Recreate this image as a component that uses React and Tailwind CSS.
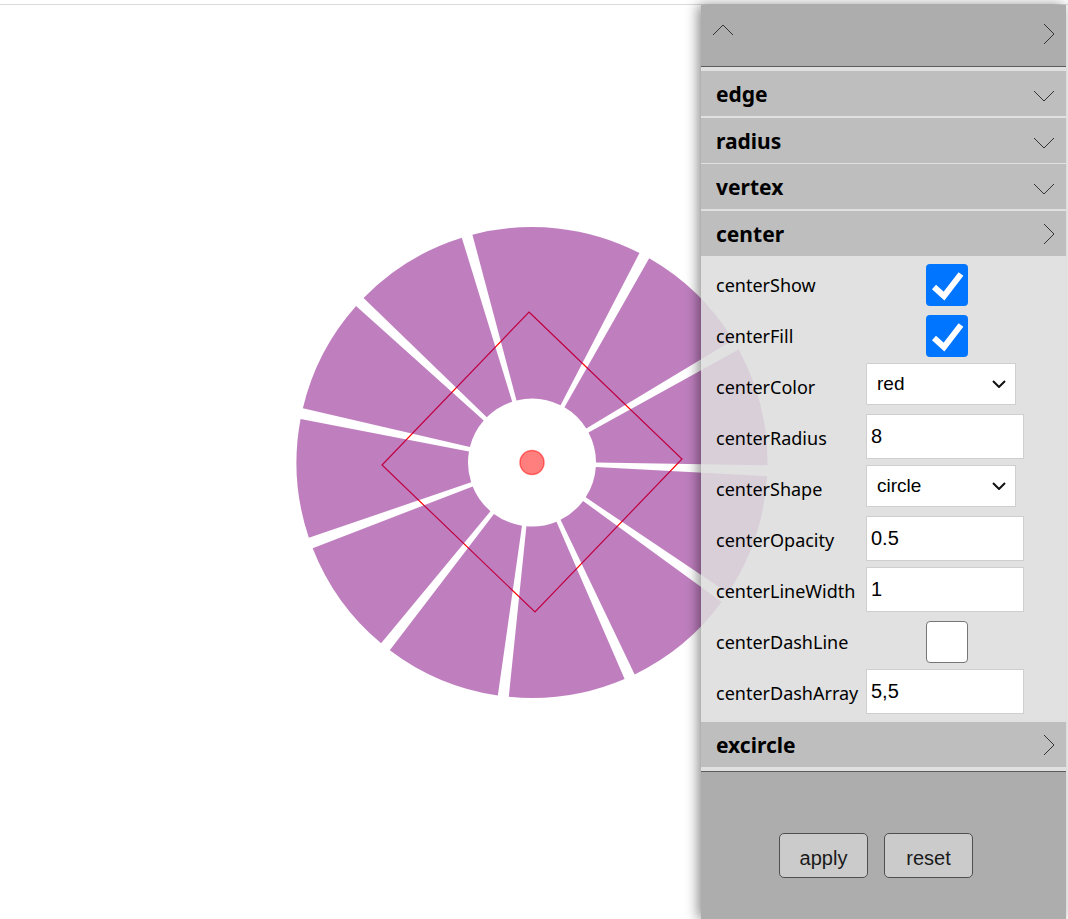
import React from "react";

const CX = 532;
const CY = 457.5;

// gap boundaries, degrees counter-clockwise from +x
const BOUNDS = [106, 61.5, 30, -2, -35, -65.5, -97, -128.5, -160, -192, -223, -254];

function pt(a, r) {
  const t = (a * Math.PI) / 180;
  return `${(CX + r * Math.cos(t)).toFixed(2)} ${(CY - r * Math.sin(t)).toFixed(2)}`;
}

function sectorPath(a1, a2) {
  const r0 = 64;
  const R = 235.5;
  const ga = 1.1;
  const gl = 1;
  const off = (r) => ga + (Math.asin(gl / r) * 180) / Math.PI;
  return [
    `M${pt(a1 + off(R), R)}`,
    `A${R} ${R} 0 0 0 ${pt(a2 - off(R), R)}`,
    `L${pt(a2 - off(r0), r0)}`,
    `A${r0} ${r0} 0 0 1 ${pt(a1 + off(r0), r0)}`,
    "Z",
  ].join(" ");
}

function Chart() {
  const sectors = [];
  for (let i = 0; i < BOUNDS.length - 1; i++) {
    sectors.push(sectorPath(BOUNDS[i + 1], BOUNDS[i]));
  }
  return (
    <svg width="1068" height="914" className="block">
      <polygon
        points="529,307 682,454 535,607 382,460"
        fill="none"
        stroke="red"
        strokeWidth="1.2"
      />
      {sectors.map((d, i) => (
        <path key={i} d={d} fill="purple" fillOpacity="0.5" />
      ))}
      <circle cx={CX} cy={CY} r="12" fill="red" fillOpacity="0.5" stroke="red" strokeOpacity="0.5" strokeWidth="1.5" />
    </svg>
  );
}

function ChevronDown() {
  return (
    <svg width="22" height="12" viewBox="0 0 22 12" className="mt-[5px]">
      <path d="M1 1 L11 11 L21 1" fill="none" stroke="#333" strokeWidth="1" />
    </svg>
  );
}

function ChevronRight() {
  return (
    <svg width="12" height="22" viewBox="0 0 12 22">
      <path d="M1 1 L11 11 L1 21" fill="none" stroke="#333" strokeWidth="1" />
    </svg>
  );
}

function SectionHeader({ title, open, className = "" }) {
  return (
    <div
      className={
        "h-[45px] bg-[#bebebe] flex items-center justify-between pl-[15px] pr-[11px] " + className
      }
    >
      <span className="pt-[3px] text-[21px] font-bold text-black" style={{ fontFamily: '"Noto Sans", sans-serif' }}>
        {title}
      </span>
      {open ? <ChevronDown /> : <ChevronRight />}
    </div>
  );
}

function Check({ on }) {
  if (!on) {
    return <div className="ml-[60px] w-[42px] h-[42px] rounded-[4px] bg-white border border-[#767676]" />;
  }
  return (
    <div className="ml-[60px] w-[42px] h-[42px] rounded-[4px] bg-[#0075ff] flex items-center justify-center">
      <svg width="42" height="42" viewBox="0 0 42 42">
        <path
          d="M8 23 L18 32 L35 10"
          fill="none"
          stroke="white"
          strokeWidth="6"
          strokeLinejoin="miter"
        />
      </svg>
    </div>
  );
}

function SelectBox({ value }) {
  return (
    <div
      className="w-[150px] h-[42px] mt-[-5px] bg-white border border-[#cfcfcf] flex items-center justify-between pl-[10px] pr-[9px] text-[19px] text-black"
      style={{ fontFamily: '"Liberation Sans", Arial, sans-serif' }}
    >
      <span>{value}</span>
      <svg width="14" height="8" viewBox="0 0 14 8">
        <path d="M1 1 L7 7 L13 1" fill="none" stroke="#111" strokeWidth="2" />
      </svg>
    </div>
  );
}

function TextBox({ value }) {
  return (
    <input
      readOnly
      value={value}
      className="w-[158px] h-[45px] mt-[-2px] bg-white border border-[#cfcfcf] pl-[4px] text-[20px] text-black outline-none"
      style={{ fontFamily: '"Liberation Sans", Arial, sans-serif' }}
    />
  );
}

const ROWS = [
  { label: "centerShow", kind: "check", value: true },
  { label: "centerFill", kind: "check", value: true },
  { label: "centerColor", kind: "select", value: "red" },
  { label: "centerRadius", kind: "text", value: "8" },
  { label: "centerShape", kind: "select", value: "circle" },
  { label: "centerOpacity", kind: "text", value: "0.5" },
  { label: "centerLineWidth", kind: "text", value: "1" },
  { label: "centerDashLine", kind: "check", value: false },
  { label: "centerDashArray", kind: "text", value: "5,5" },
];

function Panel() {
  return (
    <div
      className="absolute top-[5px] left-[701px] w-[365px] h-[914px] flex flex-col shadow-[-3px_0_12px_rgba(0,0,0,0.45)]"
      style={{ fontFamily: '"Noto Sans", sans-serif' }}
    >
      <div className="h-[62px] shrink-0 bg-[#adadad] flex items-start justify-between pl-[11px] pr-[11px] pt-[18px] border-b border-[#5c5c5c]">
        <svg width="22" height="12" viewBox="0 0 22 12" className="mt-[1px]">
          <path d="M1 11 L11 1 L21 11" fill="none" stroke="#333" strokeWidth="1" />
        </svg>
        <ChevronRight />
      </div>
      <div className="bg-[#e0e0e0] pt-[4px]">
        <SectionHeader title="edge" open />
        <SectionHeader title="radius" open className="mt-[2px]" />
        <SectionHeader title="vertex" open className="mt-[1px]" />
        <SectionHeader title="center" className="mt-[2px]" />
      </div>
      <div className="bg-[rgba(220,220,220,0.86)] pt-[3px] pb-[3px]">
        {ROWS.map((r) => (
          <div key={r.label} className="h-[51px] flex items-center pl-[15px]">
            <span className="w-[150px] text-[18px] text-black leading-none">{r.label}</span>
            {r.kind === "check" && <Check on={r.value} />}
            {r.kind === "select" && <SelectBox value={r.value} />}
            {r.kind === "text" && <TextBox value={r.value} />}
          </div>
        ))}
      </div>
      <div className="bg-[#e0e0e0] pt-[1px] pb-[4px] border-b border-[#5c5c5c]">
        <SectionHeader title="excircle" />
      </div>
      <div className="flex-1 bg-[#adadad] pl-[78px] pt-[61px] flex items-start gap-[16px]">
        <button
          className="w-[89px] h-[45px] pt-[5px] rounded-[5px] bg-[#cbcbcb] border border-[#505050] text-[20px] text-[#1a1a1a]"
          style={{ fontFamily: '"Liberation Sans", Arial, sans-serif' }}
        >
          apply
        </button>
        <button
          className="w-[89px] h-[45px] pt-[5px] rounded-[5px] bg-[#cbcbcb] border border-[#505050] text-[20px] text-[#1a1a1a]"
          style={{ fontFamily: '"Liberation Sans", Arial, sans-serif' }}
        >
          reset
        </button>
      </div>
    </div>
  );
}

export default function App() {
  return (
    <div className="relative w-[1068px] h-[919px] overflow-hidden bg-white">
      <div className="mt-[4px] border-t border-[#dadada]">
        <Chart />
      </div>
      <Panel />
    </div>
  );
}
